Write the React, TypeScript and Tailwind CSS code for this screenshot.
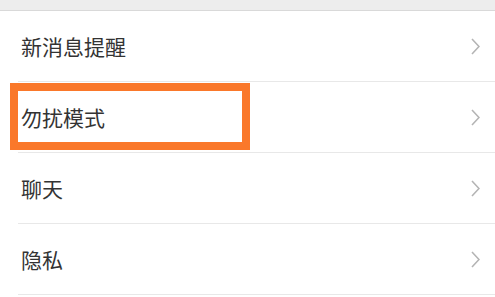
const ITEMS = ['新消息提醒', '勿扰模式', '聊天', '隐私'];

function Chevron() {
  return (
    <svg width="9" height="17" viewBox="0 0 9 17" fill="none" className="shrink-0">
      <polyline points="1,1 8,8.5 1,16" stroke="#b4b4b4" strokeWidth="1.6" strokeLinejoin="miter" />
    </svg>
  );
}

export default function App() {
  return (
    <div
      className="w-[495px] h-[297px] overflow-hidden bg-white"
      style={{ fontFamily: '"Noto Sans CJK SC", "Noto Sans", sans-serif' }}
    >
      <div className="h-[11px] bg-[#ededed] border-b border-[#d9d9d9]" />
      {ITEMS.map((label, i) => (
        <div key={label} className="relative">
          <div className="h-[70px] flex items-center justify-between pl-[21px] pr-[15px]">
            <span className="text-[21px] leading-none text-[#333333]">{label}</span>
            <Chevron />
          </div>
          <div className="ml-[18px] h-px bg-[#e8e8e8]" />
          {i === 1 && (
            <div className="absolute left-[10px] top-[1px] w-[240px] h-[67px] border-[8px] border-[#fa782a]" />
          )}
        </div>
      ))}
    </div>
  );
}
